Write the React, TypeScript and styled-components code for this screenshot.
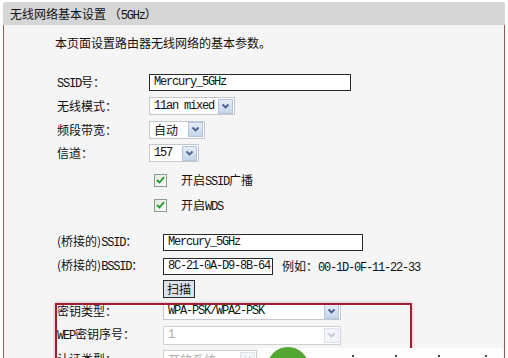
import styled, { createGlobalStyle } from 'styled-components';

const GlobalStyle = createGlobalStyle`
  html, body {
    margin: 0;
    padding: 0;
    background: #fff;
  }
  body {
    font-family: "Noto Sans CJK SC", "Liberation Sans", sans-serif;
    font-size: 12px;
    color: #111;
  }
`;

const Page = styled.div`
  position: relative;
  width: 508px;
  height: 358px;
  overflow: hidden;
  background: #fff;
  padding: 2px 0 0 3px;
  box-sizing: border-box;
`;

const Panel = styled.div`
  width: 502px;
  height: 356px;
  display: flex;
  flex-direction: column;
`;

const Header = styled.div`
  height: 23px;
  line-height: 23px;
  padding-left: 7px;
  background: #d6d6d6;
  border-radius: 2px 2px 0 0;
  color: #111;
`;

const Body = styled.div`
  flex: 1;
  background: #f5f5f5;
  border-left: 1px solid #8e5e55;
  border-right: 1px solid #8e5e55;
  padding-top: 10px;
`;

const Intro = styled.div`
  margin-left: 51px;
  height: 16px;
  line-height: 16px;
`;

const Form = styled.div<{ $top: number }>`
  margin-top: ${p => p.$top}px;
  padding-left: 53px;
  display: flex;
  flex-direction: column;
`;

const Row = styled.div<{ $h: number }>`
  display: flex;
  align-items: center;
  height: ${p => p.$h}px;
`;

const Label = styled.div<{ $w: number }>`
  width: ${p => p.$w}px;
  flex: none;
  white-space: nowrap;
  line-height: 16px;
`;

const Lat = styled.span`
  font-family: "Liberation Mono", monospace;
  font-size: 12px;
  letter-spacing: -1.2px;
`;

const Input = styled.div<{ $w: number }>`
  width: ${p => p.$w}px;
  height: 17px;
  box-sizing: border-box;
  border: 1px solid #2a2a2a;
  background: #fff;
  padding-left: 4px;
  line-height: 15px;
  font-family: "Liberation Mono", monospace;
  font-size: 12px;
  letter-spacing: -1.2px;
  white-space: nowrap;
  overflow: hidden;
`;

const SelectBox = styled.div<{ $w: number; $h: number; $off?: boolean }>`
  width: ${p => p.$w}px;
  height: ${p => p.$h}px;
  box-sizing: border-box;
  display: flex;
  align-items: center;
  background: #fff;
  border: 1px solid ${p => (p.$off ? '#cfcfcf' : '#c4c8cc')};
  color: ${p => (p.$off ? '#a8a8a8' : '#111')};
  padding: 0 1px 0 4px;
  white-space: nowrap;
`;

const SelectText = styled.span<{ $mono?: boolean }>`
  flex: 1;
  overflow: hidden;
  ${p =>
    p.$mono
      ? `font-family: "Liberation Mono", monospace; letter-spacing: -1.2px;`
      : ''}
`;

const Arrow = styled.span<{ $off?: boolean }>`
  flex: none;
  width: 15px;
  height: 15px;
  box-sizing: border-box;
  display: flex;
  align-items: center;
  justify-content: center;
  border: 1px solid ${p => (p.$off ? '#dde3ea' : '#b3c4dc')};
  background: ${p =>
    p.$off ? '#f2f4f7' : 'linear-gradient(#e4ecf7, #c6d5ea)'};
`;

const CheckRow = styled(Row)`
  padding-left: 97px;
  gap: 14px;
`;

const Check = styled.span`
  width: 13px;
  height: 13px;
  box-sizing: border-box;
  border: 1px solid #8a9c8a;
  background: linear-gradient(135deg, #e2e6e2, #fbfbfb);
  display: flex;
  align-items: center;
  justify-content: center;
`;

const Example = styled.span`
  margin-left: 9px;
  white-space: nowrap;
`;

const Button = styled.div`
  width: 32px;
  height: 18px;
  box-sizing: border-box;
  border: 1px solid #2a2a2a;
  background: #dbe4ee;
  text-align: center;
  line-height: 16px;
`;

const Highlight = styled.div`
  position: absolute;
  left: 55px;
  top: 303px;
  width: 357px;
  height: 80px;
  box-sizing: border-box;
  border: 2px solid #a01d33;
  box-shadow: 0 0 3px rgba(230, 110, 130, 0.6);
  pointer-events: none;
`;

const Watermark = styled.div`
  position: absolute;
  left: 258px;
  top: 348px;
  width: 245px;
  height: 10px;
  background: #fdfdfd;
`;

const Badge = styled.div`
  position: absolute;
  left: 9px;
  top: -1px;
  width: 42px;
  height: 42px;
  border-radius: 50%;
  background: #55a534;
`;

const Dot = styled.span<{ $x: number }>`
  position: absolute;
  left: ${p => p.$x}px;
  top: 7px;
  width: 2px;
  height: 2px;
  background: #3c4a3c;
`;

function Chevron({ off }: { off?: boolean }) {
  return (
    <svg width="9" height="7" viewBox="0 0 9 7">
      <polyline
        points="1.5,1.5 4.5,4.5 7.5,1.5"
        fill="none"
        stroke={off ? '#c2cad6' : '#4a6088'}
        strokeWidth="1.8"
      />
    </svg>
  );
}

function Select({ w, h = 18, text, mono, off }: { w: number; h?: number; text: string; mono?: boolean; off?: boolean }) {
  return (
    <SelectBox $w={w} $h={h} $off={off}>
      <SelectText $mono={mono}>{text}</SelectText>
      <Arrow $off={off}>
        <Chevron off={off} />
      </Arrow>
    </SelectBox>
  );
}

function Tick() {
  return (
    <Check>
      <svg width="9" height="8" viewBox="0 0 9 8">
        <polyline points="1,4 3.5,6.5 8,1.2" fill="none" stroke="#1f9a2a" strokeWidth="1.8" />
      </svg>
    </Check>
  );
}

export default function App() {
  return (
    <Page>
      <GlobalStyle />
      <Panel>
        <Header>
          无线网络基本设置 （<Lat>5GHz</Lat>）
        </Header>
        <Body>
          <Intro>本页面设置路由器无线网络的基本参数。</Intro>

          <Form $top={20}>
            <Row $h={23.5}>
              <Label $w={92}><Lat>SSID</Lat>号：</Label>
              <Input $w={202}>Mercury_5GHz</Input>
            </Row>
            <Row $h={23.5}>
              <Label $w={92}>无线模式：</Label>
              <Select w={86} text="11an mixed" mono />
            </Row>
            <Row $h={23.5}>
              <Label $w={92}>频段带宽：</Label>
              <Select w={56} text="自动" />
            </Row>
            <Row $h={23.5}>
              <Label $w={92}>信道：</Label>
              <Select w={50} text="157" mono />
            </Row>
          </Form>

          <Form $top={2.5}>
            <CheckRow $h={25}>
              <Tick />
              <span>开启<Lat>SSID</Lat>广播</span>
            </CheckRow>
            <CheckRow $h={25}>
              <Tick />
              <span>开启<Lat>WDS</Lat></span>
            </CheckRow>
          </Form>

          <Form $top={12.5}>
            <Row $h={24}>
              <Label $w={106}>(桥接的)<Lat>SSID</Lat>：</Label>
              <Input $w={200}>Mercury_5GHz</Input>
            </Row>
            <Row $h={24}>
              <Label $w={106}>(桥接的)<Lat>BSSID</Lat>：</Label>
              <Input $w={110}>8C-21-0A-D9-8B-64</Input>
              <Example>
                例如：<Lat>00-1D-0F-11-22-33</Lat>
              </Example>
            </Row>
            <Row $h={21}>
              <Label $w={106} />
              <Button>扫描</Button>
            </Row>
            <Row $h={24}>
              <Label $w={106}>密钥类型：</Label>
              <Select w={178} h={17} text="WPA-PSK/WPA2-PSK" mono />
            </Row>
            <Row $h={24}>
              <Label $w={106}><Lat>WEP</Lat>密钥序号：</Label>
              <Select w={178} h={19} text="1" mono off />
            </Row>
            <Row $h={24}>
              <Label $w={106}>认证类型：</Label>
              <Select w={94} h={19} text="开放系统" off />
            </Row>
          </Form>
        </Body>
      </Panel>

      <Highlight />
      <Watermark>
        <Badge />
        <Dot $x={94} />
        <Dot $x={137} />
        <Dot $x={180} />
        <Dot $x={227} />
      </Watermark>
    </Page>
  );
}
